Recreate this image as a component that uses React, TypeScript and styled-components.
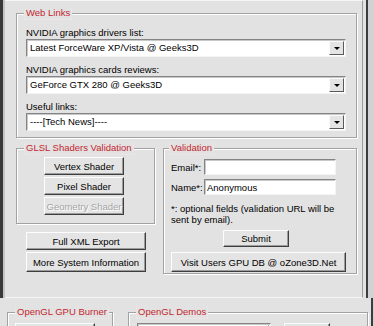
import { FC, ReactNode } from "react";
import styled, { createGlobalStyle } from "styled-components";

const GlobalStyle = createGlobalStyle`
  html, body {
    margin: 0;
    padding: 0;
    background: #e2e2e2;
  }
  body {
    font-family: "Liberation Sans", Arial, sans-serif;
    font-size: 9.5px;
    color: #000;
  }
  * {
    box-sizing: border-box;
  }
`;

interface GroupProps {
  title: string;
  width: number;
  indent?: number;
  children: ReactNode;
  className?: string;
}

const Group: FC<GroupProps> = ({ title, width, indent = 7, children, className }) => (
  <GroupBox $width={width} className={className}>
    <Legend $indent={indent}>{title}</Legend>
    {children}
  </GroupBox>
);

interface ComboProps {
  value: string;
  width?: number;
}

const Combo: FC<ComboProps> = ({ value, width }) => (
  <ComboBox $width={width}>
    <ComboText>{value}</ComboText>
    <DropButton>
      <Arrow />
    </DropButton>
  </ComboBox>
);

const App = () => {
  return (
    <>
      <GlobalStyle />
      <Window>
        <TopArea>
          <LeftEdge />
          <Page>
            <Group title="Web Links" width={341}>
              <LinksBody>
                <LinkRow>
                  <FieldLabel>NVIDIA graphics drivers list:</FieldLabel>
                  <Combo value="Latest ForceWare XP/Vista @ Geeks3D" />
                </LinkRow>
                <LinkRow>
                  <FieldLabel>NVIDIA graphics cards reviews:</FieldLabel>
                  <Combo value="GeForce GTX 280 @ Geeks3D" />
                </LinkRow>
                <LinkRow>
                  <FieldLabel>Useful links:</FieldLabel>
                  <Combo value="----[Tech News]----" />
                </LinkRow>
              </LinksBody>
            </Group>

            <Columns>
              <LeftColumn>
                <Group title="GLSL Shaders Validation" width={139}>
                  <ShaderBody>
                    <Button $w={80} $h={18}>Vertex Shader</Button>
                    <Button $w={80} $h={18}>Pixel Shader</Button>
                    <Button $w={80} $h={18} disabled>
                      Geometry Shader
                    </Button>
                  </ShaderBody>
                </Group>
                <ExportButtons>
                  <Button $w={120} $h={18}>Full XML Export</Button>
                  <Button $w={120} $h={20}>More System Information</Button>
                </ExportButtons>
              </LeftColumn>

              <Group title="Validation" width={194} indent={5}>
                <ValidationBody>
                  <InputRow>
                    <InputLabel>Email*:</InputLabel>
                    <TextInput defaultValue="" />
                  </InputRow>
                  <InputRow>
                    <InputLabel>Name*:</InputLabel>
                    <TextInput defaultValue="Anonymous" />
                  </InputRow>
                  <Note>
                    *: optional fields (validation URL will be
                    <br />
                    sent by email).
                  </Note>
                  <SubmitRow>
                    <Button $w={66} $h={17}>Submit</Button>
                  </SubmitRow>
                  <Button $w={175} $h={20}>Visit Users GPU DB @ oZone3D.Net</Button>
                </ValidationBody>
              </Group>
            </Columns>
          </Page>
          <RightEdge />
        </TopArea>

        <BottomArea>
          <Group title="OpenGL GPU Burner" width={106}>
            <BurnerBody>
              <Button $w={80} $h={24}>Start</Button>
            </BurnerBody>
          </Group>
          <DemosGroup title="OpenGL Demos" width={240}>
            <DemosBody>
              <Combo value="HQ Fur Ball Demo" width={134} />
              <Button $w={46} $h={24}>Start</Button>
            </DemosBody>
          </DemosGroup>
          <BottomRightEdge />
        </BottomArea>
      </Window>
    </>
  );
};

const Window = styled.div`
  width: 374px;
  height: 326px;
  overflow: hidden;
  display: flex;
  flex-direction: column;
  background: #e2e2e2;
`;

const TopArea = styled.div`
  display: flex;
  height: 298px;
  flex: none;
`;

const LeftEdge = styled.div`
  width: 5px;
  background: #383838;
  border-right: 2px solid #c4c4c4;
`;

const Page = styled.div`
  flex: 1;
  padding: 12px 0 0 11px;
  border-top: 1px solid #f6f6f6;
  border-right: 1px solid #9c9c9c;
  border-bottom: 1px solid #f6f6f6;
`;

const RightEdge = styled.div`
  width: 11px;
  background: #3c3c3c;
  border-left: 3px solid #e2e2e2;
  border-right: 6px solid #d2d2d2;
`;

const GroupBox = styled.div<{ $width: number }>`
  width: ${(p) => p.$width}px;
  border: 1px solid #a2a2a2;
  box-shadow: inset 1px 1px 0 #fff, 1px 1px 0 #fff;
`;

const Legend = styled.div<{ $indent: number }>`
  display: table;
  margin: -7px 0 0 ${(p) => p.$indent}px;
  padding: 0 1px;
  line-height: 12px;
  height: 12px;
  color: #c4262e;
  background: #e2e2e2;
  border: 1px solid #ede4e4;
  border-width: 0 1px 1px 1px;
  white-space: nowrap;
`;

const LinksBody = styled.div`
  display: flex;
  flex-direction: column;
  gap: 7px;
  padding: 7px 10px 6px 9px;
`;

const LinkRow = styled.div`
  display: flex;
  flex-direction: column;
`;

const FieldLabel = styled.div`
  line-height: 12px;
  height: 12px;
  white-space: nowrap;
`;

const ComboBox = styled.div<{ $width?: number }>`
  display: flex;
  height: 18px;
  width: ${(p) => (p.$width ? `${p.$width}px` : "auto")};
  background: #fff;
  border: 1px solid;
  border-color: #848484 #f4f4f4 #f4f4f4 #848484;
  box-shadow: inset 1px 1px 0 #c8c8c8;
`;

const ComboText = styled.div`
  flex: 1;
  padding-left: 3px;
  line-height: 16px;
  white-space: nowrap;
  overflow: hidden;
`;

const DropButton = styled.div`
  width: 15px;
  margin: 1px;
  display: flex;
  align-items: center;
  justify-content: center;
  background: #e4e4e4;
  border: 1px solid;
  border-color: #fafafa #5a5a5a #5a5a5a #fafafa;
`;

const Arrow = styled.span`
  width: 0;
  height: 0;
  border-left: 3px solid transparent;
  border-right: 3px solid transparent;
  border-top: 3px solid #000;
  margin-top: 1px;
`;

const Columns = styled.div`
  display: flex;
  align-items: flex-start;
  gap: 8px;
  margin-top: 10px;
`;

const LeftColumn = styled.div`
  display: flex;
  flex-direction: column;
`;

const ShaderBody = styled.div`
  display: flex;
  flex-direction: column;
  gap: 2px;
  padding: 2px 0 8px 27px;
`;

const ExportButtons = styled.div`
  display: flex;
  flex-direction: column;
  gap: 2px;
  margin: 8px 0 0 10px;
`;

const Button = styled.button<{ $w: number; $h: number }>`
  width: ${(p) => p.$w}px;
  height: ${(p) => p.$h}px;
  padding: 0;
  font: inherit;
  color: #000;
  background: #e4e4e4;
  border: 1px solid;
  border-color: #fdfdfd #3e3e3e #3e3e3e #fdfdfd;
  box-shadow: inset -1px -1px 0 #9c9c9c;
  white-space: nowrap;

  &:disabled {
    color: #a4a4a4;
    text-shadow: 1px 1px 0 #fff;
  }
`;

const ValidationBody = styled.div`
  display: flex;
  flex-direction: column;
  padding: 4px 0 1px 7px;
`;

const InputRow = styled.div`
  display: flex;
  align-items: center;
  margin-bottom: 4px;
`;

const InputLabel = styled.div`
  width: 33px;
  white-space: nowrap;
`;

const TextInput = styled.input`
  width: 132px;
  height: 16px;
  padding: 0 2px;
  font: inherit;
  color: #000;
  background: #fff;
  border: 1px solid;
  border-color: #848484 #f4f4f4 #f4f4f4 #848484;
  box-shadow: inset 1px 1px 0 #c8c8c8;
  outline: none;
`;

const Note = styled.div`
  margin-top: 4px;
  line-height: 11px;
`;

const SubmitRow = styled.div`
  display: flex;
  padding-left: 52px;
  margin: 5px 0;
`;

const BottomArea = styled.div`
  flex: 1;
  display: flex;
  align-items: flex-start;
  padding: 14px 0 0 7px;
`;

const BurnerBody = styled.div`
  padding: 4px 0 4px 7px;
`;

const DemosGroup = styled(Group)`
  margin-left: 15px;
`;

const DemosBody = styled.div`
  display: flex;
  align-items: flex-start;
  gap: 13px;
  padding: 4px 0 4px 8px;
`;

const BottomRightEdge = styled.div`
  align-self: stretch;
  margin-top: -14px;
  margin-left: auto;
  width: 3px;
  background: #3c3c3c;
  border-right: 1px solid #d2d2d2;
`;

export default App;
